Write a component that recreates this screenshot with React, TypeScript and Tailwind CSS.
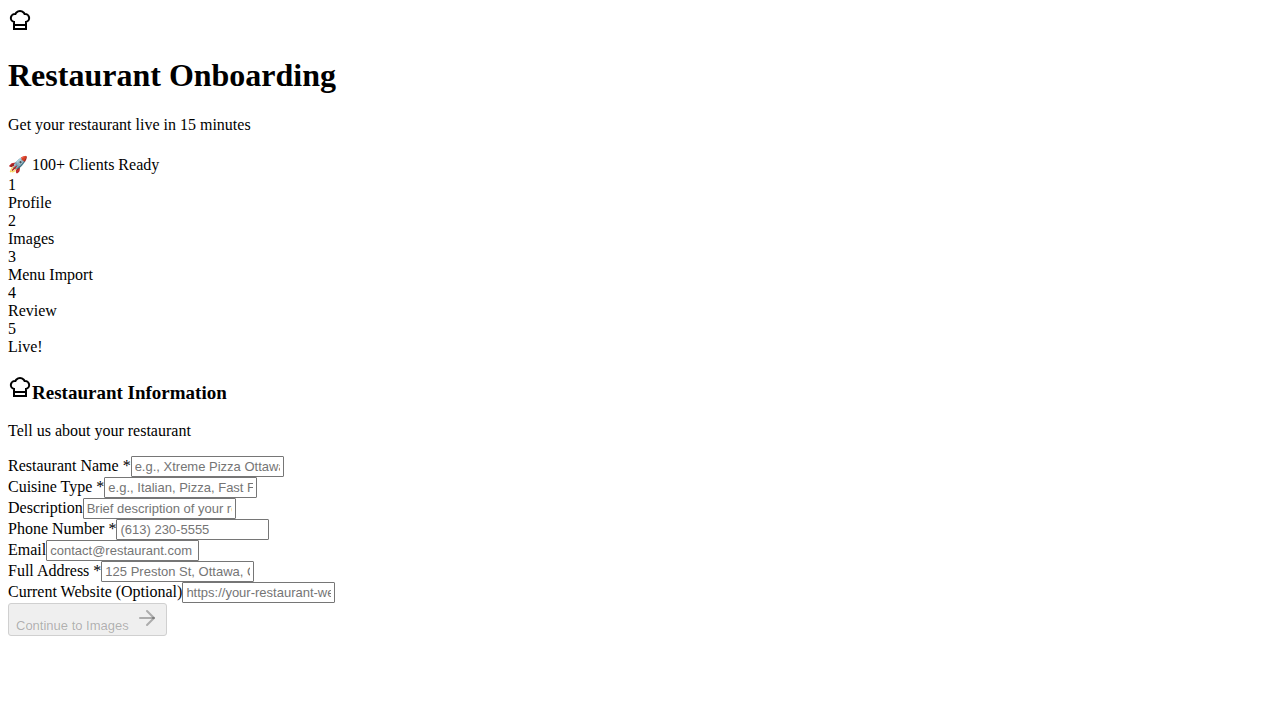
const steps = ["Profile", "Images", "Menu Import", "Review", "Live!"];

const fields = [
  { id: "name", label: "Restaurant Name *", placeholder: "e.g., Xtreme Pizza Ottawa", type: "text" },
  { id: "cuisine", label: "Cuisine Type *", placeholder: "e.g., Italian, Pizza, Fast Food", type: "text" },
  { id: "description", label: "Description", placeholder: "Brief description of your restaurant", type: "text" },
  { id: "phone", label: "Phone Number *", placeholder: "(613) 230-5555", type: "text" },
  { id: "email", label: "Email", placeholder: "contact@restaurant.com", type: "email" },
  { id: "address", label: "Full Address *", placeholder: "125 Preston St, Ottawa, ON", type: "text" },
  { id: "website", label: "Current Website (Optional)", placeholder: "https://your-restaurant-website.com", type: "text" },
];

function ChefHat() {
  return (
    <svg
      width="24"
      height="24"
      viewBox="0 0 24 24"
      fill="none"
      stroke="currentColor"
      strokeWidth="2"
      className="block shrink-0"
      aria-hidden="true"
    >
      <path d="M6 13.87A4 4 0 0 1 7.41 6a5.11 5.11 0 0 1 1.05-1.54 5 5 0 0 1 7.08 0A5.11 5.11 0 0 1 16.59 6 4 4 0 0 1 18 13.87V21H6Z" />
      <path d="M6 17h12" />
    </svg>
  );
}

function ArrowRight() {
  return (
    <svg
      width="24"
      height="24"
      viewBox="0 0 24 24"
      fill="none"
      stroke="currentColor"
      strokeWidth="2"
      strokeLinecap="round"
      strokeLinejoin="round"
      className="mb-[3px] block shrink-0"
      aria-hidden="true"
    >
      <path d="M5 12h14" />
      <path d="m12 5 7 7-7 7" />
    </svg>
  );
}

export default function App() {
  return (
    <main className="bg-white p-2 font-['Liberation_Serif',serif] text-base leading-[18px] text-black">
      <header>
        <ChefHat />
        <h1 className="mt-[25px] text-[32px] leading-9 font-bold">Restaurant Onboarding</h1>
        <p className="mt-[23px]">Get your restaurant live in 15 minutes</p>
        <div className="mt-5 leading-[22px]">🚀 100+ Clients Ready</div>
      </header>
      <ol>
        {steps.map((step, i) => (
          <li key={step}>
            <div>{i + 1}</div>
            <div>{step}</div>
          </li>
        ))}
      </ol>
      <section>
        <h3 className="mt-[19px] flex items-baseline text-[19px] leading-6 font-bold">
          <ChefHat />
          Restaurant Information
        </h3>
        <p className="mt-[17px]">Tell us about your restaurant</p>
        <form className="mt-4">
          {fields.map((f) => (
            <div key={f.id} className="flex items-baseline">
              <label htmlFor={f.id}>{f.label}</label>
              <input
                id={f.id}
                type={f.type}
                placeholder={f.placeholder}
                className="h-[21px] w-[153px] rounded-[1px] border border-[#767676] bg-white px-[3px] font-['Liberation_Sans',sans-serif] text-[13px] leading-[15px] placeholder:text-[#757575]"
              />
            </div>
          ))}
          <button
            type="submit"
            disabled
            className="flex h-[33px] items-end gap-[6px] rounded-[3px] border border-[#d0d0d0] bg-[#efefef] px-[7px] pb-[2px] font-['Liberation_Sans',sans-serif] text-[13px] leading-[15px] text-[#101010]/30"
          >
            Continue to Images
            <ArrowRight />
          </button>
        </form>
      </section>
    </main>
  );
}
